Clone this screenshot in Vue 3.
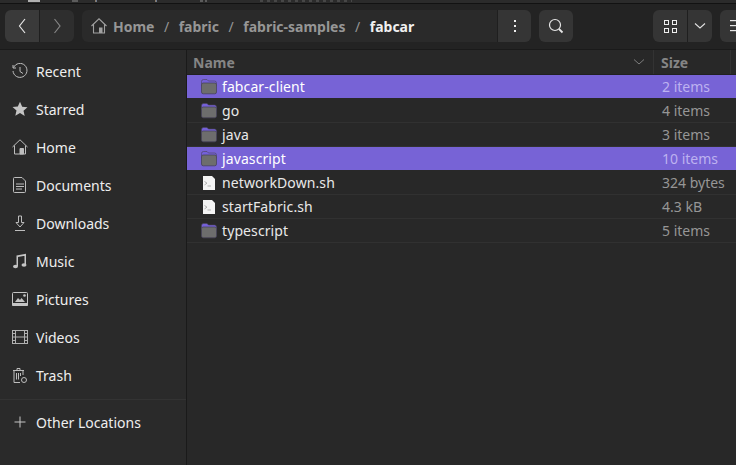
<script setup>
const places = [
  { name: 'Recent', icon: 'recent' },
  { name: 'Starred', icon: 'star' },
  { name: 'Home', icon: 'home' },
  { name: 'Documents', icon: 'doc' },
  { name: 'Downloads', icon: 'down' },
  { name: 'Music', icon: 'music' },
  { name: 'Pictures', icon: 'pic' },
  { name: 'Videos', icon: 'video' },
  { name: 'Trash', icon: 'trash' },
]

const files = [
  { name: 'fabcar-client', size: '2 items', type: 'folder', selected: true },
  { name: 'go', size: '4 items', type: 'folder' },
  { name: 'java', size: '3 items', type: 'folder' },
  { name: 'javascript', size: '10 items', type: 'folder', selected: true },
  { name: 'networkDown.sh', size: '324 bytes', type: 'script' },
  { name: 'startFabric.sh', size: '4.3 kB', type: 'script' },
  { name: 'typescript', size: '5 items', type: 'folder' },
]
</script>

<template>
  <div class="window">
    <div class="behind"></div>
    <header class="toolbar">
      <div class="btn-group nav">
        <button class="btn back">
          <svg width="16" height="18" viewBox="0 0 16 18"><path d="M11 2 5.500 9l5.500 7" fill="none" stroke="#e6e6e6" stroke-width="1.200"/></svg>
        </button>
        <button class="btn forward">
          <svg width="16" height="18" viewBox="0 0 16 18"><path d="M5.500 2 11 9l-5.500 7" fill="none" stroke="#858585" stroke-width="1.200"/></svg>
        </button>
      </div>
      <div class="path">
        <svg class="path-home" width="16" height="16" viewBox="0 0 16 16"><path d="M.5 8 8 .8 15.500 8M2.500 6.500V15h11V6.500" fill="none" stroke="#a0a0a0" stroke-width="1.100"/><path d="M8 9.500h3.500V15H8z" fill="#a0a0a0"/></svg>
        <span class="crumb">Home</span><span class="sep">/</span>
        <span class="crumb">fabric</span><span class="sep">/</span>
        <span class="crumb">fabric-samples</span><span class="sep">/</span>
        <span class="crumb current">fabcar</span>
        <button class="path-menu">
          <svg width="4" height="12" viewBox="0 0 4 12" fill="#eeeeee"><rect x="1" y="0" width="2" height="2"/><rect x="1" y="5" width="2" height="2"/><rect x="1" y="10" width="2" height="2"/></svg>
        </button>
      </div>
      <button class="btn single search">
        <svg width="16" height="16" viewBox="0 0 16 16"><circle cx="7" cy="7" r="5.500" fill="none" stroke="#e6e6e6" stroke-width="1.200"/><path d="m11 11 3.500 3.500" stroke="#e6e6e6" stroke-width="1.800"/></svg>
      </button>
      <div class="btn-group view">
        <button class="btn grid-btn">
          <svg width="13" height="13" viewBox="0 0 13 13" fill="none" stroke="#eeeeee"><rect x=".5" y=".5" width="4" height="4"/><rect x="8.500" y=".5" width="4" height="4"/><rect x=".5" y="8.500" width="4" height="4"/><rect x="8.500" y="8.500" width="4" height="4"/></svg>
        </button>
        <button class="btn caret-btn">
          <svg width="12" height="8" viewBox="0 0 12 8"><path d="m1 1.500 5 4.500 5-4.500" fill="none" stroke="#e0e0e0" stroke-width="1.100"/></svg>
        </button>
      </div>
      <button class="btn single menu">
        <svg width="14" height="12" viewBox="0 0 14 12" fill="#e6e6e6"><rect y="0" width="14" height="1.200"/><rect y="5" width="14" height="1.200"/><rect y="10" width="14" height="1.200"/></svg>
      </button>
    </header>

    <div class="body">
      <aside class="sidebar">
        <ul class="places">
          <li v-for="p in places" :key="p.name" class="place">
            <svg class="place-icon" width="16" height="16" viewBox="0 0 16 16">
              <g v-if="p.icon === 'recent'" fill="none" stroke="#bdbdbd" stroke-width="1">
                <path d="M1.600 4.500A7 7 0 1 1 1 8"/><path d="M8 4v4.500l3 2"/><path d="M1 2v3h3"/>
              </g>
              <path v-else-if="p.icon === 'star'" d="m8 .8 2.200 4.900 5.300.5-4 3.500 1.200 5.300L8 12l-4.700 2.700 1.200-5.300-4-3.500 5.300-.5z" fill="#c4c4c4"/>
              <g v-else-if="p.icon === 'home'" fill="none" stroke="#bdbdbd">
                <path d="M.5 8 8 .8 15.500 8M2.500 6.500V15h11V6.500"/><path d="M8 9.500h3.500V15H8z" fill="#bdbdbd"/>
              </g>
              <g v-else-if="p.icon === 'doc'" fill="none" stroke="#bdbdbd">
                <path d="M2.500.5h7.500l3.500 3.500v10.500a1 1 0 0 1-1 1h-10a1 1 0 0 1-1-1v-13a1 1 0 0 1 1-1z"/><path d="M4 7h8M4 9.500h8M4 12h6"/>
              </g>
              <g v-else-if="p.icon === 'down'" fill="none" stroke="#bdbdbd">
                <path d="M6.500 1h3v6.500h2.500L8 12 4 7.500h2.500zM3 15.500h10"/>
              </g>
              <g v-else-if="p.icon === 'music'" fill="#c4c4c4">
                <path d="M4.500 2.500 14 .8v1.800L6 4v9H4.500zM12.500 2.500H14V12h-1.500z"/><ellipse cx="3.500" cy="13.500" rx="2.500" ry="1.800"/><ellipse cx="12" cy="12" rx="2.500" ry="1.800"/>
              </g>
              <g v-else-if="p.icon === 'pic'">
                <rect x=".5" y="1.500" width="15" height="13" rx="1" fill="none" stroke="#c4c4c4"/>
                <path d="M0 12h16v2a1 1 0 0 1-1 1H1a1 1 0 0 1-1-1z" fill="#c4c4c4"/>
                <path d="m3 11 3-4 2 2 1.500-2 3.500 4z" fill="#c4c4c4"/><circle cx="12.500" cy="4.500" r="1.300" fill="#c4c4c4"/>
              </g>
              <g v-else-if="p.icon === 'video'" fill="none" stroke="#b0b0b0">
                <rect x=".5" y="1.500" width="15" height="13"/><path d="M3.500 1.500v13M12.500 1.500v13M3.500 8h9M.5 4.500h3M.5 8h3M.5 11.500h3M12.500 4.500h3M12.500 8h3M12.500 11.500h3"/>
              </g>
              <g v-else fill="none" stroke="#bdbdbd">
                <path d="M1 3.500h11M5 3.500v-2h3v2M2 3.500V15.500h6"/><path d="M11 3.500V8M4.500 6v6.500M6.500 6v6.500M8.500 6v3"/><circle cx="12" cy="13" r="2.500"/>
              </g>
            </svg>
            <span class="place-name">{{ p.name }}</span>
          </li>
        </ul>
        <div class="place other">
          <svg class="place-icon" width="16" height="16" viewBox="0 0 16 16"><path d="M8 2.500v11M2.500 8h11" stroke="#c4c4c4" stroke-width="1"/></svg>
          <span class="place-name">Other Locations</span>
        </div>
      </aside>

      <main class="list">
        <div class="list-head">
          <div class="col-name">
            <span>Name</span>
            <svg width="12" height="8" viewBox="0 0 12 8"><path d="m1 1.500 5 4.500 5-4.500" fill="none" stroke="#7d7d7d"/></svg>
          </div>
          <div class="col-size">Size</div>
          <div class="col-rest"></div>
        </div>
        <div v-for="f in files" :key="f.name" class="row" :class="{ selected: f.selected }">
          <div class="cell-name">
            <svg v-if="f.type === 'folder'" class="file-icon" width="16" height="16" viewBox="0 0 16 16">
              <path d="M.5 2.500a2 2 0 0 1 2-2h3.500l1.500 1.500h6a2 2 0 0 1 2 2v3H.5z" fill="#7460d8" stroke="#4a4458" stroke-width=".6"/>
              <rect x=".5" y="4" width="15" height="10.800" rx="1.800" fill="#6d6d6d" stroke="#48445a" stroke-width=".8"/>
            </svg>
            <svg v-else class="file-icon" width="16" height="16" viewBox="0 0 16 16">
              <path d="M2 1h9l3 3v11H2z" fill="#f4f4f4"/>
              <path d="m3.500 6.500 2.500 1.700-2.500 1.700M6.500 11h3.500" fill="none" stroke="#b0b0b0"/>
            </svg>
            <span class="file-name">{{ f.name }}</span>
          </div>
          <div class="cell-size">{{ f.size }}</div>
        </div>
      </main>
    </div>
  </div>
</template>

<style>
html, body {
  margin: 0;
  background: #292929;
  overflow: hidden;
}
</style>

<style scoped>
.window {
  width: 736px;
  height: 465px;
  background: #292929;
  color: #eeeeee;
  font-family: "Noto Sans", sans-serif;
  font-size: 14px;
  overflow: hidden;
  display: flex;
  flex-direction: column;
}

/* bottom edge of whatever window sits behind this one */
.behind {
  height: 3px;
  flex: none;
  background-color: #2b2b2b;
  background-image:
    linear-gradient(90deg, transparent 28px, #b0b0b0 28px, #b0b0b0 40px, transparent 40px,
      transparent 72px, #5c5c5c 72px, #5c5c5c 78px, transparent 78px,
      transparent 95px, #9a7c50 95px, #5f7aa8 97px, transparent 97px,
      transparent 155px, #9a7c50 155px, #5f7aa8 157px, transparent 157px,
      transparent 200px, #5c5c5c 200px, #5c5c5c 203px, transparent 203px,
      transparent 205px, #5c5c5c 205px, #5c5c5c 207px, transparent 207px),
    repeating-linear-gradient(90deg, #474747 0, #474747 3px, transparent 3px, transparent 7px);
  background-size: 100% 2px, 92px 2px, 163px 2px;
  background-position: 0 0, 260px 0, 400px 0;
  background-repeat: no-repeat;
}

.toolbar {
  height: 44px;
  flex: none;
  background: #232323;
  border-top: 1px solid #121212;
  border-bottom: 1px solid #1a1a1a;
  display: flex;
  align-items: center;
  padding: 0 0 1px 5px;
}

button {
  border: none;
  padding: 0;
  display: flex;
  align-items: center;
  justify-content: center;
}

.btn-group {
  display: flex;
  height: 32px;
  border-radius: 6px;
  overflow: hidden;
  flex: none;
}

.btn {
  height: 32px;
  background: #353535;
  flex: none;
}

.nav .btn {
  width: 34px;
}

.nav .back {
  width: 35px;
  background: #3a3a3a;
  border-right: 1px solid #1f1f1f;
}

.nav .forward {
  background: #2e2e2e;
}

.path {
  width: 449px;
  height: 32px;
  flex: none;
  margin-left: 8px;
  padding-left: 9px;
  box-sizing: border-box;
  border-radius: 6px;
  background: #2a2a2a;
  overflow: hidden;
  display: flex;
  align-items: center;
  font-weight: 700;
  color: #969696;
  white-space: nowrap;
}

.path-home {
  margin-right: 6px;
  flex: none;
}

.sep {
  margin: 0 9.500px;
  font-weight: 400;
}

.current {
  color: #f0f0f0;
}

.path-menu {
  width: 34px;
  height: 32px;
  margin-left: auto;
  background: #353535;
  border-left: 1px solid #1f1f1f;
}

.single {
  border-radius: 6px;
}

.search {
  width: 34px;
  margin-left: 8px;
}

.view {
  margin-left: 80px;
}

.grid-btn {
  width: 35px;
  border-right: 1px solid #1f1f1f;
}

.caret-btn {
  width: 24px;
}

.menu {
  width: 34px;
  margin-left: 8px;
  justify-content: flex-start;
  padding-left: 10px;
}

.body {
  flex: 1;
  display: flex;
  min-height: 0;
}

.sidebar {
  width: 186px;
  flex: none;
  box-sizing: content-box;
  border-right: 1px solid #1a1a1a;
  background: #2a2a2a;
}

.places {
  list-style: none;
  margin: 0;
  padding: 2px 0 5px;
  border-bottom: 1px solid #333333;
}

.place {
  height: 38px;
  display: flex;
  align-items: center;
  padding-left: 12px;
}

.other {
  height: 44px;
}

.place-icon {
  flex: none;
  margin-right: 8px;
}

.list {
  flex: 1;
  min-width: 0;
  background: #282828;
}

.list-head {
  height: 25px;
  display: flex;
  align-items: center;
  font-weight: 700;
  color: #858585;
  border-bottom: 1px solid #202020;
  box-sizing: border-box;
}

.col-name {
  width: 467px;
  height: 100%;
  flex: none;
  box-sizing: border-box;
  padding: 0 8px 0 6px;
  display: flex;
  align-items: center;
  justify-content: space-between;
  border-right: 1px solid #333333;
}

.col-size {
  width: 77px;
  height: 100%;
  flex: none;
  box-sizing: border-box;
  padding-left: 7px;
  display: flex;
  align-items: center;
  border-right: 1px solid #333333;
}

.row {
  height: 24px;
  display: flex;
  align-items: center;
  box-sizing: border-box;
  border-bottom: 1px solid #313131;
}

.row.selected {
  background: #7763d6;
  border-bottom-color: #282828;
}

.cell-name {
  width: 467px;
  flex: none;
  display: flex;
  align-items: center;
  padding-left: 14px;
  box-sizing: border-box;
}

.file-icon {
  flex: none;
  margin-right: 5px;
}

.file-name {
  color: #e8e8e8;
  letter-spacing: 0.1px;
}

.selected .file-name {
  color: #ffffff;
}

.cell-size {
  padding-left: 8px;
  color: #969696;
}

.selected .cell-size {
  color: #bdb2f0;
}
</style>
